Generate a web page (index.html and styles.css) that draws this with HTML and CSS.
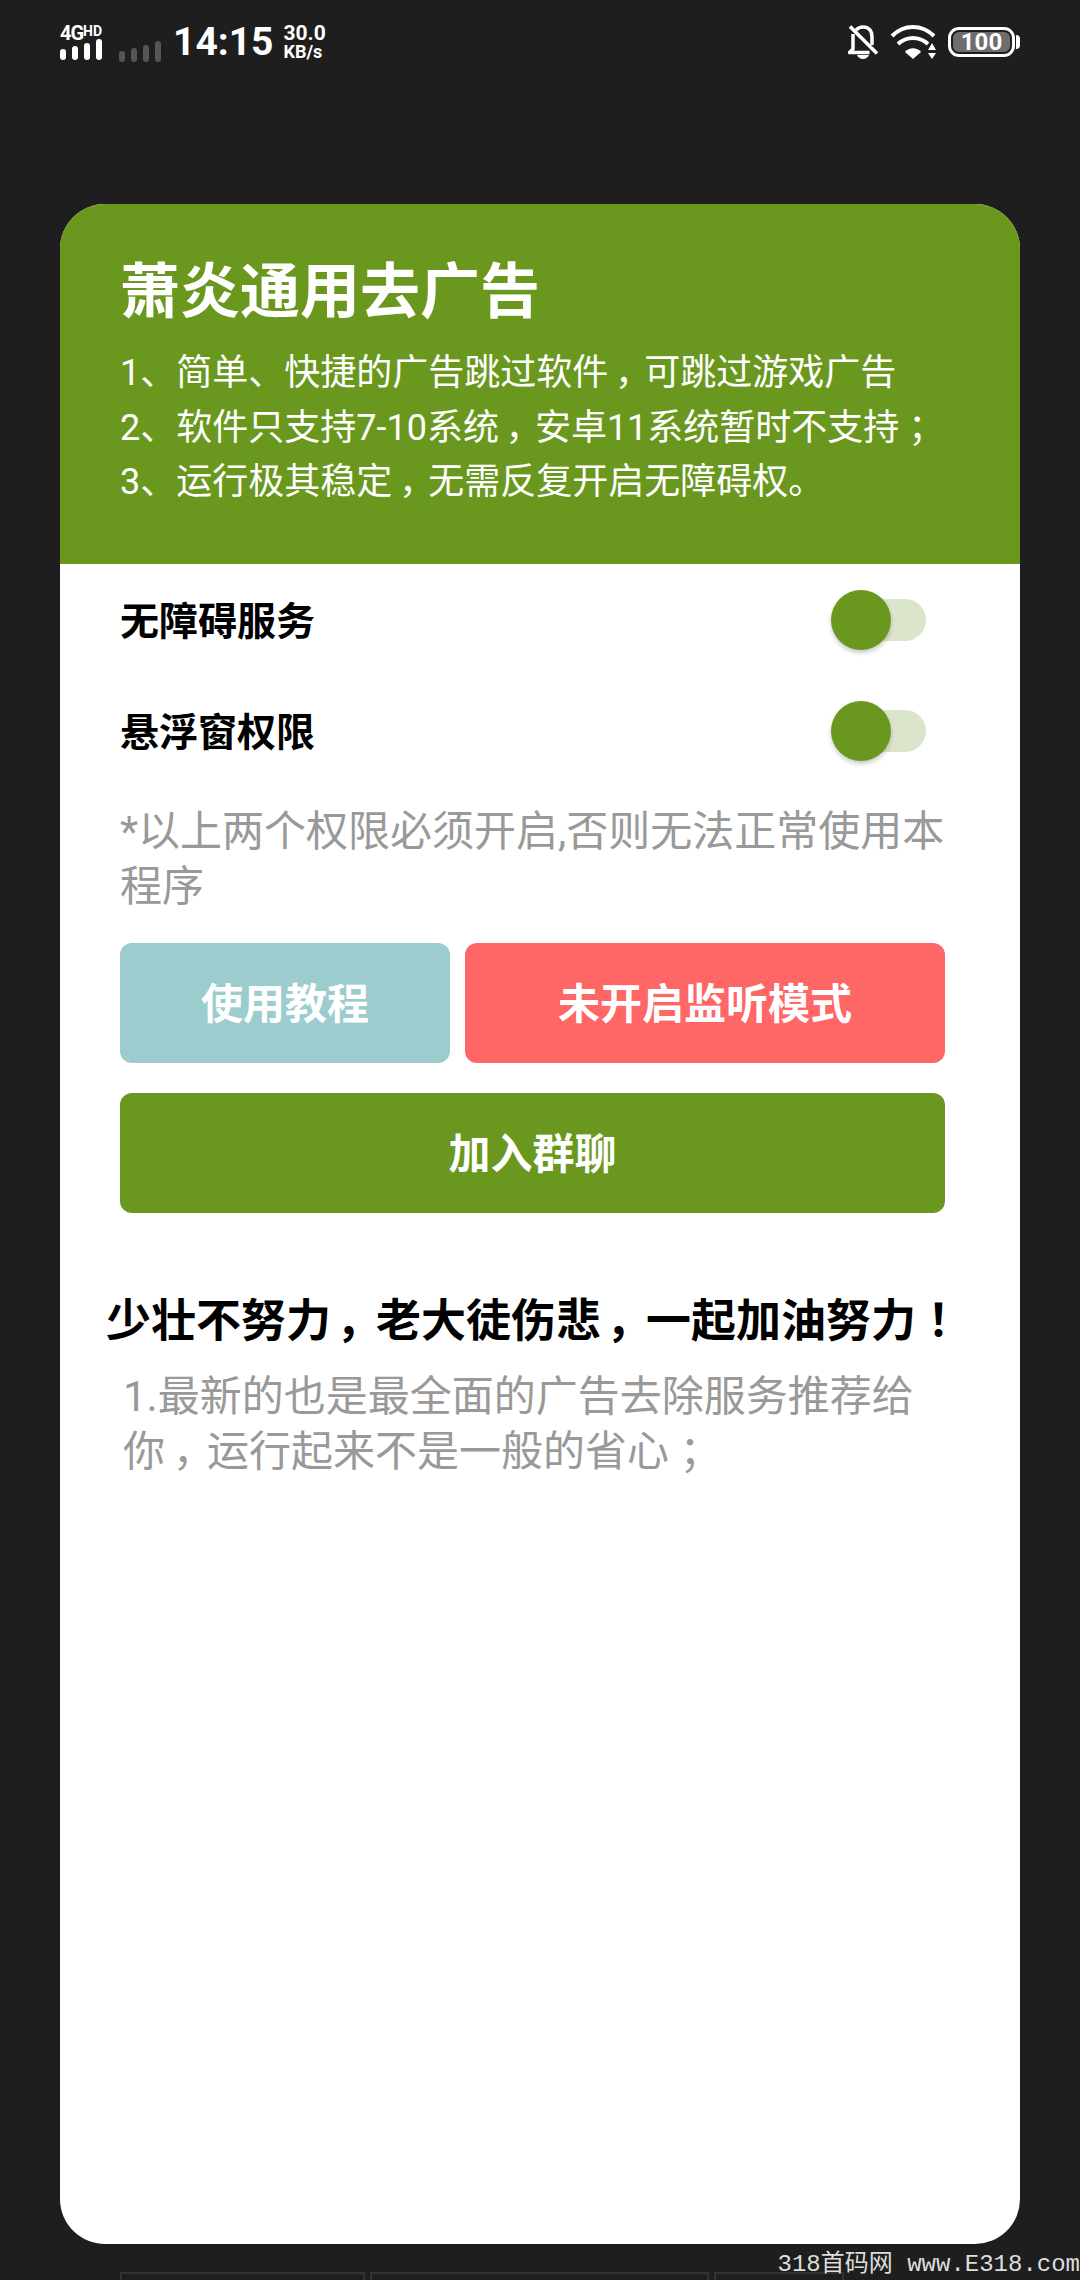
FILE: index.html
```html
<!DOCTYPE html>
<html>
<head>
  <title>萧炎通用去广告</title>
  <link rel="stylesheet" href="styles.css">
</head>
<body>
  <div class="status-bar">
    <div class="status-left">
      <div class="signal">
        <div class="net-label">4G<span class="hd">HD</span></div>
        <div class="bars">
          <i class="b1"></i><i class="b2"></i><i class="b3"></i><i class="b4"></i>
        </div>
      </div>
      <div class="bars dim">
        <i class="b1"></i><i class="b2"></i><i class="b3"></i><i class="b4"></i>
      </div>
      <div class="clock">14:15</div>
      <div class="speed">30.0<br><span>KB/s</span></div>
    </div>
    <div class="status-right">
      <svg class="bell" width="31" height="34" viewBox="0 0 31 34">
        <path d="M8 5C10 3 12 2 15 2c6 0 9 4 9 10v8" fill="none" stroke="#fff" stroke-width="3.500"/>
        <path d="M5 9v15l-3.500 3.500h20" fill="none" stroke="#fff" stroke-width="3.500" stroke-linejoin="round"/>
        <path d="M9 30h12c-1 2.500-3.500 4-6 4s-5-1.500-6-4z" fill="#fff"/>
        <path d="M2 1.500l27 27" stroke="#fff" stroke-width="3.500"/>
      </svg>
      <svg class="wifi" width="47" height="34" viewBox="0 0 47 34">
        <path d="M2 11C14-1 32-1 44 11" fill="none" stroke="#fff" stroke-width="4"/>
        <path d="M8 19c9-8 21-8 30 0" fill="none" stroke="#fff" stroke-width="4"/>
        <path d="M15 27c4-5 12-5 16 0l-8 7z" fill="#fff"/>
        <path d="M42 18l4 7h-8zM42 34l-4-6h8z" fill="#fff"/>
      </svg>
      <div class="battery"><div class="battery-level">100</div></div>
      <div class="battery-cap"></div>
    </div>
  </div>

  <div class="card">
    <div class="card-header">
      <h1>萧炎通用去广告</h1>
      <p>1、简单、快捷的广告跳过软件<span class="pn">，</span>可跳过游戏广告</p>
      <p>2、软件只支持7-10系统<span class="pn">，</span>安卓11系统暂时不支持<span class="pn">；</span></p>
      <p>3、运行极其稳定<span class="pn">，</span>无需反复开启无障碍权。</p>
    </div>
    <div class="card-body">
      <div class="perm-row">
        <span class="perm-name">无障碍服务</span>
        <div class="switch"><div class="knob"></div></div>
      </div>
      <div class="perm-row">
        <span class="perm-name">悬浮窗权限</span>
        <div class="switch"><div class="knob"></div></div>
      </div>
      <p class="hint">*以上两个权限必须开启,否则无法正常使用本程序</p>
      <div class="btn-row">
        <div class="btn btn-teal">使用教程</div>
        <div class="btn btn-red">未开启监听模式</div>
      </div>
      <div class="btn btn-green">加入群聊</div>
      <div class="motto">少壮不努力<span class="pn">，</span>老大徒伤悲<span class="pn">，</span>一起加油努力<span class="pn">！</span></div>
      <p class="note">1.最新的也是最全面的广告去除服务推荐给<br>你<span class="pn">，</span>运行起来不是一般的省心<span class="pn">；</span></p>
    </div>
  </div>

  <div class="bottom-tabs">
    <div class="tab tab-a"></div>
    <div class="tab tab-b"></div>
    <div class="tab tab-c"></div>
  </div>
  <div class="watermark">318首码网 www.E318.com</div>
</body>
</html>
```

FILE: styles.css
```css
* {
  box-sizing: border-box;
}

html, body {
  height: 2280px;
  overflow: hidden;
}

body {
  position: relative;
  margin: 0;
  background-color: #1e1e1e;
  font-family: Roboto, "Noto Sans CJK SC", sans-serif;
}

.status-bar {
  display: flex;
  justify-content: space-between;
  align-items: center;
  height: 84px;
  padding: 0 60px;
  color: #fff;
}

.status-left,
.status-right {
  display: flex;
  align-items: center;
}

.signal {
  width: 46px;
  margin-right: 13px;
}

.net-label {
  height: 15px;
  font-size: 20px;
  line-height: 15px;
  font-weight: 700;
  letter-spacing: -1px;
  white-space: nowrap;
}

.hd {
  font-size: 14px;
  letter-spacing: 0;
  vertical-align: 4px;
}

.bars {
  display: flex;
  align-items: flex-end;
  gap: 6px;
  height: 21px;
}

.bars i {
  display: block;
  width: 6px;
  background-color: #fff;
  border-radius: 3px;
}

.bars.dim {
  align-self: flex-end;
  margin-bottom: 3px;
}

.bars.dim i {
  background-color: #555;
}

.b1 { height: 11px; }
.b2 { height: 14px; }
.b3 { height: 17px; }
.b4 { height: 21px; }

.clock {
  margin-left: 12px;
  font-size: 39px;
  font-weight: 700;
}

.speed {
  margin-left: 10px;
  font-size: 21px;
  line-height: 18px;
  font-weight: 700;
}

.speed span {
  font-size: 18px;
}

.bell {
  margin-right: 11px;
}

.wifi {
  margin-right: 11px;
}

.battery {
  width: 67px;
  height: 30px;
  padding: 2px;
  border: 3px solid #fff;
  border-radius: 11px;
}

.battery-level {
  height: 20px;
  background-color: #6e6e6e;
  border-radius: 6px;
  font-size: 24px;
  line-height: 20px;
  font-weight: 700;
  text-align: center;
}

.battery-cap {
  width: 4px;
  height: 14px;
  margin-left: 1px;
  background-color: #fff;
  border-radius: 0 4px 4px 0;
}

.card {
  height: 2040px;
  margin: 120px 60px 0;
  background-color: #fff;
  border-radius: 45px;
  overflow: hidden;
}

.card-header {
  height: 360px;
  padding: 49px 60px 0;
  background-color: #6a981f;
  color: #fff;
}

.card-header h1 {
  margin: 0 0 13px;
  font-size: 60px;
  line-height: 80px;
  font-weight: 700;
}

.card-header p {
  margin: 0;
  font-size: 36px;
  line-height: 54.5px;
  white-space: nowrap;
}

/* full width punctuation sits in the middle of its box on the phone */
.pn {
  display: inline-block;
  width: 1em;
  font-family: "Noto Sans CJK SC", sans-serif;
  font-feature-settings: "palt";
  line-height: 1;
  text-align: center;
}

.card-body {
  padding: 0 75px 0 60px;
}

.perm-row {
  display: flex;
  justify-content: space-between;
  align-items: center;
  height: 111px;
  color: #000;
}

.perm-name {
  margin-bottom: 3px;
  font-size: 39px;
  font-weight: 700;
}

.switch {
  position: relative;
  width: 95px;
  height: 42px;
  margin-right: 19px;
  background-color: #dbe5cb;
  border-radius: 21px;
}

.knob {
  position: absolute;
  top: -9px;
  left: 0;
  width: 60px;
  height: 60px;
  background-color: #6a981f;
  border-radius: 50%;
  box-shadow: 0 3px 4px rgba(0, 0, 0, 0.2);
}

.hint {
  margin: 18px -8px 0 0;
  font-size: 42px;
  line-height: 55px;
  color: #999;
}

.btn-row {
  display: flex;
  gap: 15px;
  margin: 29px 0 30px;
}

.btn {
  display: flex;
  justify-content: center;
  align-items: center;
  height: 120px;
  padding-bottom: 5px;
  border-radius: 12px;
  font-size: 42px;
  font-weight: 700;
  color: #fff;
}

.btn-teal {
  width: 330px;
  background-color: #9ccccd;
}

.btn-red {
  flex: 1;
  background-color: #ff6666;
}

.btn-green {
  background-color: #6a981f;
}

.motto {
  margin: 79px -20px 0 -18px;
  font-size: 45px;
  line-height: 60px;
  font-weight: 700;
  color: #000;
  text-align: center;
  white-space: nowrap;
}

.note {
  margin: 17px 0 0 3px;
  font-size: 42px;
  line-height: 55px;
  color: #999;
}

.bottom-tabs {
  display: flex;
  gap: 5px;
  margin: 28px 0 0 120px;
}

.tab {
  height: 8px;
  border: 2px solid #333;
  border-bottom: none;
}

.tab-a { width: 245px; }
.tab-b { width: 339px; }
.tab-c { width: 130px; }

.watermark {
  position: absolute;
  right: 0;
  bottom: 0;
  font-family: "Liberation Mono", "Noto Sans CJK SC", monospace;
  font-size: 24px;
  line-height: 30px;
  color: #ddd;
  white-space: nowrap;
}
```
